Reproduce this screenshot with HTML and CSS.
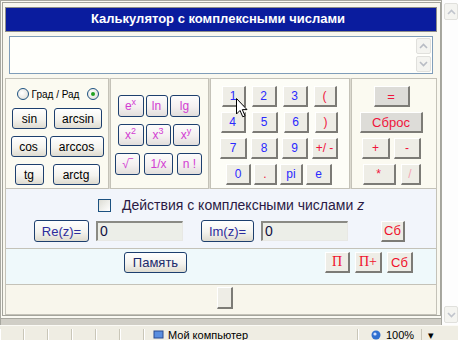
FILE: index.html
```html
<!DOCTYPE html>
<html lang="ru">
<head>
    <meta charset="UTF-8">
    <title>Калькулятор с комплексными числами</title>
    <link rel="stylesheet" href="styles.css">
</head>
<body>
<div class="window">
    <div class="viewport">
        <div class="page">
            <div class="calc">
                <div class="title">Калькулятор с комплексными числами</div>
                <div class="display">
                    <div class="screen">
                        <div class="screen-scroll">
                            <span class="sbtn"><svg width="9" height="6" viewBox="0 0 9 6"><path d="M1 5 L4.5 1.5 L8 5" fill="none" stroke="#b8bcc4" stroke-width="1.6"/></svg></span>
                            <span class="sbtn"><svg width="9" height="6" viewBox="0 0 9 6"><path d="M1 1 L4.5 4.5 L8 1" fill="none" stroke="#b8bcc4" stroke-width="1.6"/></svg></span>
                        </div>
                    </div>
                </div>
                <div class="keys">
                    <div class="panel trig">
                        <div class="radios">
                            <span class="radio"></span>
                            <span class="radio-label">Град / Рад</span>
                            <span class="radio checked"></span>
                        </div>
                        <div class="row g7"><button class="btn w35">sin</button><button class="btn w48">arcsin</button></div>
                        <div class="row g3"><button class="btn w36">cos</button><button class="btn w54">arccos</button></div>
                        <div class="row g9"><button class="btn w29">tg</button><button class="btn w47">arctg</button></div>
                    </div>
                    <div class="panel funcs">
                        <div class="row g2"><button class="btn fn w26">e<sup>x</sup></button><button class="btn fn w22">ln</button><button class="btn fn w30">lg</button></div>
                        <div class="row g2"><button class="btn fn w26">x<sup>2</sup></button><button class="btn fn w25">x<sup>3</sup></button><button class="btn fn w27">x<sup>y</sup></button></div>
                        <div class="row g4"><button class="btn fn w25">√‾</button><button class="btn fn w29">1/x</button><button class="btn fn w25">n !</button></div>
                    </div>
                    <div class="panel digits">
                        <div class="row g6"><button class="key num w24">1</button><button class="key num w25">2</button><button class="key num w25">3</button><button class="key op w23">(</button></div>
                        <div class="row g6"><button class="key num w25">4</button><button class="key num w26">5</button><button class="key num w25">6</button><button class="key op w23">)</button></div>
                        <div class="row g4"><button class="key num w27">7</button><button class="key num w27">8</button><button class="key num w26">9</button><button class="key op w26">+/ -</button></div>
                        <div class="row g3"><button class="key num w25">0</button><button class="key op w23">.</button><button class="key num w23">pi</button><button class="key num w26">e</button></div>
                    </div>
                    <div class="panel ops">
                        <div class="row"><button class="key op dark w36">=</button></div>
                        <div class="row"><button class="key op dark w63">Сброс</button></div>
                        <div class="row g4"><button class="key op w28">+</button><button class="key op w27">-</button></div>
                        <div class="row g5"><button class="key op w33">*</button><button class="key off w20">/</button></div>
                    </div>
                </div>
                <div class="complex">
                    <div class="check-line">
                        <span class="checkbox"></span>
                        <span>Действия с комплексными числами <i>z</i></span>
                    </div>
                    <div class="parts">
                        <button class="btn part w55">Re(z)=</button>
                        <span class="field">0</span>
                        <button class="btn part w53 im">Im(z)=</button>
                        <span class="field">0</span>
                        <button class="key mem sb w24">Сб</button>
                    </div>
                </div>
                <div class="memory">
                    <button class="btn part w63">Память</button>
                    <div class="mem-keys">
                        <button class="key mem serif w25">П</button>
                        <button class="key mem serif w27">П+</button>
                        <button class="key mem w26">Сб</button>
                    </div>
                </div>
                <div class="footer">
                    <button class="key blank"></button>
                </div>
            </div>
            <div class="band"></div>
        </div>
        <div class="vscroll">
            <span class="sbtn"><svg width="9" height="6" viewBox="0 0 9 6"><path d="M1 5 L4.5 1.5 L8 5" fill="none" stroke="#c0c4cc" stroke-width="1.6"/></svg></span>
            <span class="sbtn"><svg width="9" height="6" viewBox="0 0 9 6"><path d="M1 1 L4.5 4.5 L8 1" fill="none" stroke="#c0c4cc" stroke-width="1.6"/></svg></span>
        </div>
    </div>
    <div class="status">
        <span class="cell"></span><span class="cell"></span><span class="cell"></span>
        <span class="cell"></span><span class="cell"></span><span class="cell"></span>
        <span class="cell main">
            <svg width="11" height="11" viewBox="0 0 11 11"><rect x="1" y="1" width="9" height="7" fill="#5a8ee0" stroke="#2a4a90"/></svg>
            Мой компьютер
        </span>
        <span class="cell zoom">
            <svg width="10" height="10" viewBox="0 0 10 10"><circle cx="5" cy="5" r="4.5" fill="#3070d0"/><circle cx="4" cy="4" r="1.6" fill="#cfe0ff"/></svg>
            100%
        </span>
        <span class="cell drop">▾</span>
    </div>
    <svg class="cursor" width="12" height="20" viewBox="0 0 12 20"><path d="M0.5 0.5 L0.5 16 L4 12.5 L6.8 18.8 L9 17.8 L6.3 11.6 L11 11.6 Z" fill="#fff" stroke="#000" stroke-width="1"/></svg>
</div>
</body>
</html>
```

FILE: styles.css
```css
body {
    margin: 0;
    width: 458px;
    height: 340px;
    overflow: hidden;
    font-family: "Liberation Sans", Arial, sans-serif;
    background: #ffffff;
}
.window {
    position: relative;
    display: flex;
    flex-direction: column;
    height: 340px;
}
.viewport {
    display: flex;
    height: 327px;
}
.page {
    width: 441px;
    display: flex;
    flex-direction: column;
    border-left: 1px solid #a8a8a0;
    border-top: 1px solid #a8a8a0;
    background: #fbfaf3;
    box-sizing: border-box;
}
.calc {
    margin: 1px 0 0 1px;
    width: 439px;
    box-sizing: border-box;
    border: 1px solid #a4a49c;
    padding: 4px 3px 0 2px;
    background: #f9f8ef;
    display: flex;
    flex-direction: column;
}
.title {
    height: 25px;
    box-sizing: border-box;
    border: 1px solid #8e8e8a;
    background: #0a1c9e;
    color: #ffffff;
    font-weight: bold;
    font-size: 13px;
    line-height: 22px;
    text-align: center;
    padding-right: 6px;
}
.display {
    height: 46px;
    padding: 4px 4px 0 4px;
    box-sizing: border-box;
}
.screen {
    height: 38px;
    box-sizing: border-box;
    border: 1px solid #7f9db9;
    background: #fffffb;
    display: flex;
    justify-content: flex-end;
}
.screen-scroll {
    display: flex;
    flex-direction: column;
    justify-content: space-between;
    padding: 1px 1px 1px 0;
}
.sbtn {
    width: 15px;
    height: 16px;
    box-sizing: border-box;
    border: 1px solid #e0e0dc;
    border-radius: 2px;
    background: #f4f4f0;
    display: flex;
    align-items: center;
    justify-content: center;
}
.keys {
    height: 111px;
    display: flex;
    gap: 1px;
    background: #dcdad0;
}
.panel {
    box-sizing: border-box;
    border: 1px solid #c4c2b8;
    background: #fbfaf1;
    display: flex;
    flex-direction: column;
}
.trig { width: 104px; padding-top: 9px; }
.funcs { width: 99px; padding: 16px 2px 0 0; gap: 7px; }
.digits { width: 140px; padding: 7px 2px 0 0; gap: 5px; background: #fdfdf7; }
.ops { width: 86px; padding: 7px 5px 0 0; gap: 5px; }
.row {
    display: flex;
    justify-content: center;
}
.trig .row { margin-top: 7px; }
.trig .radios + .row { margin-top: 8px; }
.g2 { gap: 2px; }
.g3 { gap: 3px; }
.g4 { gap: 4px; }
.g5 { gap: 5px; }
.g6 { gap: 6px; }
.g7 { gap: 7px; }
.g9 { gap: 9px; }
.radios {
    display: flex;
    align-items: center;
    justify-content: center;
    height: 12px;
    gap: 3px;
    padding-left: 2px;
}
.radio {
    width: 12px;
    height: 12px;
    box-sizing: border-box;
    border: 1px solid #1c5180;
    border-radius: 50%;
    background: radial-gradient(circle at 40% 40%, #ffffff, #dcdad2);
    display: flex;
    align-items: center;
    justify-content: center;
}
.radio.checked::after {
    content: "";
    width: 4px;
    height: 4px;
    border-radius: 50%;
    background: #21a121;
}
.radio-label {
    font-size: 10px;
    color: #000000;
    margin-right: 5px;
}
button {
    font-family: "Liberation Sans", Arial, sans-serif;
    padding: 0;
    margin: 0;
    cursor: pointer;
}
.btn {
    height: 21px;
    box-sizing: border-box;
    border: 1px solid #1d3f6e;
    border-radius: 3px;
    background: linear-gradient(#ffffff, #f4f3ee 55%, #dedbd0);
    font-size: 12px;
    color: #000000;
}
.btn.fn {
    height: 22px;
    color: #d23cd2;
    font-size: 12px;
    background: linear-gradient(#fdfcfc, #f4f0f0 55%, #e2dedc);
}
.btn sup {
    font-size: 9px;
    line-height: 0;
    vertical-align: 5px;
}
.key {
    height: 21px;
    box-sizing: border-box;
    border-style: solid;
    border-width: 1px 2px 2px 1px;
    border-color: #ffffff #7c7b76 #7c7b76 #ffffff;
    background: #eeede6;
    font-size: 12px;
}
.num { color: #2a2aff; }
.op { color: #f0143c; }
.key.dark { background: #dddcd8; color: #f0143c; font-size: 13px; }
.off { color: #f4a4b4; }
.w20 { width: 20px; } .w22 { width: 22px; } .w23 { width: 23px; } .w24 { width: 24px; }
.w25 { width: 25px; } .w26 { width: 26px; } .w27 { width: 27px; } .w28 { width: 28px; }
.w29 { width: 29px; } .w30 { width: 30px; } .w33 { width: 33px; } .w35 { width: 35px; }
.w36 { width: 36px; } .w47 { width: 47px; } .w48 { width: 48px; } .w53 { width: 53px; }
.w54 { width: 54px; } .w55 { width: 55px; } .w63 { width: 63px; }
.complex {
    height: 60px;
    box-sizing: border-box;
    border: 1px solid #c4c2b8;
    border-top: none;
    background: #f2f5fb;
    padding-top: 9px;
}
.check-line {
    display: flex;
    align-items: center;
    gap: 11px;
    padding-left: 92px;
    font-size: 14px;
    color: #2a1a44;
    height: 14px;
}
.checkbox {
    width: 13px;
    height: 13px;
    box-sizing: border-box;
    border: 1px solid #1c5180;
    background: linear-gradient(135deg, #dcdcd4, #ffffff);
}
.parts {
    display: flex;
    align-items: center;
    margin-top: 8px;
    padding-left: 28px;
}
.btn.part {
    height: 22px;
    font-size: 13px;
    color: #2c2c9c;
}
.field {
    width: 87px;
    height: 20px;
    box-sizing: border-box;
    border-style: solid;
    border-width: 2px 1px 1px 2px;
    border-color: #8a8a84 #e8e8e4 #e8e8e4 #8a8a84;
    background: #eceee8;
    font-size: 14px;
    line-height: 17px;
    padding-left: 2px;
    color: #101040;
    margin-left: 7px;
}
.im { margin-left: 18px; }
.sb { margin-left: 33px; }
.key.mem {
    color: #f0102c;
    font-size: 13px;
}
.key.serif {
    font-family: "Liberation Serif", "Times New Roman", serif;
    font-size: 14px;
}
.memory {
    height: 36px;
    box-sizing: border-box;
    border: 1px solid #c4c2b8;
    border-top: none;
    background: #eff9fb;
    display: flex;
    align-items: flex-start;
    padding: 3px 0 0 118px;
}
.memory .btn.part {
    height: 21px;
    color: #1a2a6a;
}
.mem-keys {
    display: flex;
    gap: 5px;
    margin-left: 138px;
}
.footer {
    height: 30px;
    box-sizing: border-box;
    border: 1px solid #c4c2b8;
    border-top: none;
    background: #f8f6ec;
    display: flex;
    justify-content: center;
    padding-top: 2px;
    padding-left: 7px;
}
.key.blank {
    width: 16px;
    height: 22px;
}
.band {
    flex: 1;
    margin-top: 2px;
    border-top: 1px solid #a8a8a0;
    background: #d0cec6;
}
.vscroll {
    width: 17px;
    height: 325px;
    box-sizing: border-box;
    border-left: 1px solid #a8a8a0;
    background: #fdfdfd;
    display: flex;
    flex-direction: column;
    justify-content: space-between;
    padding: 3px 0 2px 2px;
}
.vscroll .sbtn {
    width: 14px;
    height: 17px;
}
.status {
    flex: 1;
    display: flex;
    align-items: flex-start;
    background: #efede3;
    border-top: 1px solid #fbfaf5;
    font-size: 11px;
    color: #000000;
    padding-top: 3px;
}
.cell {
    width: 22px;
    height: 12px;
    border-right: 1px solid #c9c6b8;
    border-left: 1px solid #ffffff;
    flex-shrink: 0;
    line-height: 13px;
}
.cell.main {
    width: 204px;
    display: flex;
    align-items: center;
    gap: 4px;
    padding-left: 8px;
}
.cell.zoom {
    width: 50px;
    display: flex;
    align-items: center;
    gap: 5px;
    padding-left: 12px;
}
.cell.drop {
    border: none;
    width: auto;
    padding-left: 6px;
}
.cursor {
    position: absolute;
    left: 236px;
    top: 98px;
}
```
